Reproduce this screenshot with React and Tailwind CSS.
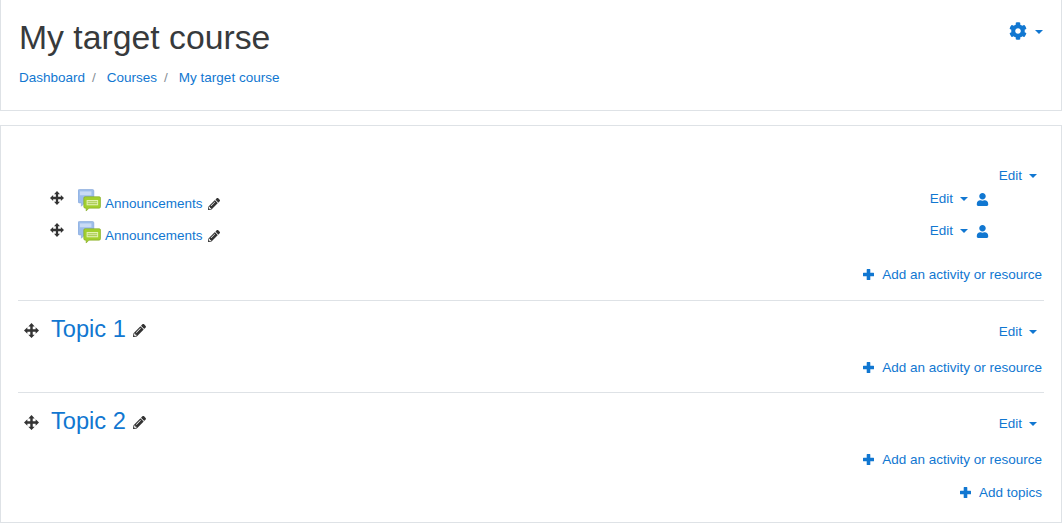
import React from "react";
import { FaCog, FaPencilAlt, FaUser } from "react-icons/fa";

const blue = "text-[#1177d1]";

function Caret({ className = "" }) {
  return <span className={`inline-block w-0 h-0 border-x-[4px] border-x-transparent border-t-[4px] border-t-[#1177d1] ${className}`} />;
}

function Move({ size = 15 }) {
  return (
    <svg width={size} height={size} viewBox="0 0 16 16" fill="#333">
      <path d="M8 0 L11.4 3.6 H9.3 V6.7 H12.4 V4.6 L16 8 L12.4 11.4 V9.3 H9.3 V12.4 H11.4 L8 16 L4.6 12.4 H6.7 V9.3 H3.6 V11.4 L0 8 L3.6 4.6 V6.7 H6.7 V3.6 H4.6 Z" />
    </svg>
  );
}

function Plus() {
  return (
    <svg width="11" height="11" viewBox="0 0 11 11" fill="#1177d1" className="mr-[8px] mt-[-1px]">
      <path d="M4.2 0 H6.8 a.5 .5 0 0 1 .5 .5 V3.7 H10.5 a.5 .5 0 0 1 .5 .5 V6.8 a.5 .5 0 0 1 -.5 .5 H7.3 V10.5 a.5 .5 0 0 1 -.5 .5 H4.2 a.5 .5 0 0 1 -.5 -.5 V7.3 H.5 a.5 .5 0 0 1 -.5 -.5 V4.2 a.5 .5 0 0 1 .5 -.5 H3.7 V.5 a.5 .5 0 0 1 .5 -.5 Z" />
    </svg>
  );
}

function ForumIcon() {
  return (
    <svg width="23" height="23" viewBox="0 0 24 24">
      <path d="M1.5 0.5 H15 a1.5 1.5 0 0 1 1.5 1.5 V13 a1.5 1.5 0 0 1 -1.5 1.5 H7 L3.5 18 V14.5 H1.5 A1.5 1.5 0 0 1 0 13 V2 A1.5 1.5 0 0 1 1.5 0.5 Z" fill="#9dbdea" stroke="#7ea3d8" strokeWidth="0.6" />
      <rect x="2" y="2.5" width="12" height="4" fill="#c9dbf5" />
      <path d="M7.5 8 H22 a1.5 1.5 0 0 1 1.5 1.5 V18.5 a1.5 1.5 0 0 1 -1.5 1.5 H11.5 L8.5 23 V20 H7.5 A1.5 1.5 0 0 1 6 18.5 V9.5 A1.5 1.5 0 0 1 7.5 8 Z" fill="#a2cf2e" stroke="#7fa622" strokeWidth="0.6" />
      <rect x="9" y="11.5" width="12" height="5.5" fill="#e4f2b4" />
      <rect x="10" y="13" width="10" height="0.8" fill="#8fb728" />
      <rect x="10" y="15" width="10" height="0.8" fill="#8fb728" />
    </svg>
  );
}

function Edit({ user }) {
  return (
    <div className="flex items-center">
      <span className={blue}>Edit</span>
      <Caret className="ml-[7px]" />
      {user && <FaUser className="ml-[8px] text-[#1177d1]" size={13} />}
    </div>
  );
}

function AddActivity() {
  return (
    <div className="flex items-center justify-end pr-[2px]">
      <Plus />
      <span className={blue}>Add an activity or resource</span>
    </div>
  );
}

function Activity() {
  return (
    <div className="h-[32px] flex items-start pl-[32px] pr-[55px]">
      <span className="mt-[2px] w-[28px]"><Move size={14} /></span>
      <span className="flex items-end h-[24px] mt-[-1px]">
        <ForumIcon />
        <span className={`${blue} ml-[4px] leading-[16px]`}>Announcements</span>
        <FaPencilAlt size={12} className="ml-[5px] mb-[2px] text-[#333]" />
      </span>
      <span className="ml-auto"><Edit user /></span>
    </div>
  );
}

function Topic({ name }) {
  return (
    <div className="border-t border-[#dee2e6] h-[92px] pt-[14px]">
      <div className="flex items-start pl-[6px]">
        <span className="mt-[8px] w-[27px]"><Move size={15} /></span>
        <span className={`${blue} text-[23.625px] leading-[28px]`}>{name}</span>
        <FaPencilAlt size={13} className="ml-[7px] mt-[9px] text-[#333]" />
        <span className="ml-auto mt-[7px] mr-[7px]"><Edit /></span>
      </div>
      <div className="mt-[15px]"><AddActivity /></div>
    </div>
  );
}

export default function App() {
  return (
    <div className="w-[1062px] h-[526px] bg-white text-[13.5px] leading-[20px] font-['Liberation_Sans',sans-serif] overflow-hidden">
      <header className="h-[111px] border border-t-0 border-[#dee2e6] pl-[18px] pr-[18px] pt-[16px] flex justify-between">
        <div>
          <h1 className="text-[33.75px] leading-[42px] text-[#373a3c]">My target course</h1>
          <nav className="mt-[10px] flex">
            <span className={blue}>Dashboard</span>
            <span className="text-[#868e96] ml-[7px] mr-[11px]">/</span>
            <span className={blue}>Courses</span>
            <span className="text-[#868e96] ml-[7px] mr-[11px]">/</span>
            <span className={blue}>My target course</span>
          </nav>
        </div>
        <div className="flex items-center h-[18px] mt-[6px]">
          <FaCog size={18} className="text-[#1177d1]" />
          <Caret className="ml-[8px] mt-[2px]" />
        </div>
      </header>
      <main className="mt-[14px] h-[398px] border border-[#dee2e6] px-[17px]">
        <div className="h-[174px] pt-[37px]">
          <div className="flex justify-end pr-[7px] h-[26px]"><Edit /></div>
          <Activity />
          <Activity />
          <div className="mt-[12px]"><AddActivity /></div>
        </div>
        <Topic name="Topic 1" />
        <Topic name="Topic 2" />
        <div className="flex items-center justify-end pr-[2px] mt-[-1px]">
          <Plus />
          <span className={blue}>Add topics</span>
        </div>
      </main>
    </div>
  );
}
